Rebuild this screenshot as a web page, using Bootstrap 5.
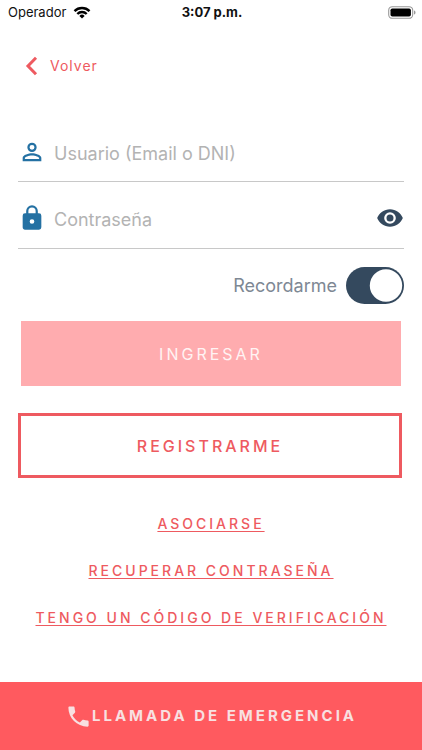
<!DOCTYPE html>
<html lang="es">
<head>
<meta charset="utf-8">
<meta name="viewport" content="width=device-width, initial-scale=1">
<title>Ingresar</title>
<link rel="stylesheet" href="https://cdn.jsdelivr.net/npm/bootstrap@5.3.0/dist/css/bootstrap.min.css">
<style>
:root { --coral: #ff5a5f; --coral-text: #ee5a60; --navy: #34495e; --blue: #2471a3; }
body { font-family: Inter, "Liberation Sans", sans-serif; color: #111; background: #fff; }
svg { display: block; flex: none; }
.status-bar { height: 24px; padding: 0 6px 0 8px; font-size: 13px; line-height: 24px; }
.status-bar .side { flex: 1 1 0; gap: 7px; }
.login-area { padding: 0 18px; }
.back-link { color: var(--coral-text); font-size: 14px; line-height: 20px; letter-spacing: 1px; margin: 32px 0 0 7px; gap: 12px; }
.login-form { margin-top: 40px; }
.field { height: 67px; padding: 14px 0 8px; border-bottom: 1px solid #c8c8c8; color: var(--blue); gap: 8px; }
.field:first-child { height: 60px; padding: 0; }
.field input { border: 0; padding: 0; font-size: 18px; line-height: 24px; margin-top: 4px; background: none; box-shadow: none; color: #333; }
.field input:focus { box-shadow: none; background: none; }
.field input::placeholder { color: #b3b3b3; opacity: 1; }
.eye-btn { color: var(--navy); border: 0; padding: 0; }
.remember { margin-top: 18px; gap: 9px; font-size: 18px; line-height: 37px; color: #7e8894; }
.remember .form-check-input { width: 58px; height: 37px; margin: 0; border: 0; background-size: 37px; }
.remember .form-check-input:checked { background-color: var(--navy); background-position: right center;
  background-image: url("data:image/svg+xml,%3csvg xmlns='http://www.w3.org/2000/svg' viewBox='0 0 37 37'%3e%3ccircle cx='19' cy='18.5' r='16.2' fill='white'/%3e%3c/svg%3e"); }
.tracked { letter-spacing: 3px; }
.main-btn { height: 65px; border-radius: 0; font-size: 16px; }
.enter-btn, .enter-btn:hover { background: #ffacaf; color: #fff3f3; margin: 17px 3px 0; }
.register-btn, .register-btn:hover { border: 3px solid var(--coral-text); color: var(--coral-text); margin: 27px 2px 0 0; font-weight: 500; }
.links { margin-top: 35px; gap: 25px; font-size: 14px; line-height: 22px; font-weight: 500; }
.links a { color: var(--coral-text); text-underline-offset: 2px; text-decoration-thickness: 1px; }
.emergency, .emergency:hover { background: var(--coral); color: #f8e0e1; height: 68px; border-radius: 0; font-size: 15px; font-weight: 700; }
</style>
<script defer src="https://cdn.jsdelivr.net/npm/bootstrap@5.3.0/dist/js/bootstrap.bundle.min.js"></script>
</head>
<body class="d-flex flex-column min-vh-100">
<header class="status-bar d-flex align-items-center">
  <div class="side d-flex align-items-center">
    <span>Operador</span>
    <svg width="18" height="13" viewBox="0 0 18 13" fill="none" stroke="#000" stroke-width="2.4" aria-hidden="true"><path d="M1.5 5.1a10.6 10.6 0 0 1 15 0M4.3 8a6.7 6.7 0 0 1 9.4 0"/><path d="M9 12.5 6.4 9.9a3.7 3.7 0 0 1 5.2 0z" fill="#000" stroke="none"/></svg>
  </div>
  <div class="fw-bold">3:07 p.m.</div>
  <div class="side d-flex justify-content-end">
    <svg width="28" height="13" viewBox="0 0 28 13" aria-hidden="true"><rect x=".7" y=".7" width="24" height="11.6" rx="3.6" fill="none" stroke="#999" stroke-width="1.1"/><rect x="2.5" y="2.4" width="20.4" height="8.2" rx="1.8"/><path d="M26 4.5c2 .6 2 3.4 0 4z" fill="#999"/></svg>
  </div>
</header>
<main class="login-area">
  <a href="#" class="back-link d-inline-flex align-items-center text-decoration-none">
    <svg width="13" height="20" viewBox="0 0 13 20" fill="none" stroke="currentColor" stroke-width="3" aria-hidden="true"><path d="M11 1.8 3 10l8 8.2"/></svg>
    Volver
  </a>
  <form class="login-form d-flex flex-column">
    <div class="field d-flex align-items-center">
      <svg width="28" height="28" viewBox="0 0 24 24" fill="currentColor" aria-hidden="true"><path d="M12 5.9a2.1 2.1 0 1 1 0 4.2 2.1 2.1 0 0 1 0-4.2m0 9c2.97 0 6.1 1.46 6.1 2.1v1.1H5.9V17c0-.64 3.13-2.1 6.1-2.1M12 4a4 4 0 1 0 0 8 4 4 0 0 0 0-8zm0 9c-2.67 0-8 1.34-8 4v3h16v-3c0-2.66-5.33-4-8-4z"/></svg>
      <input type="text" class="form-control" placeholder="Usuario (Email o DNI)" aria-label="Usuario (Email o DNI)">
    </div>
    <div class="field d-flex align-items-center">
      <svg width="28" height="28" viewBox="0 0 24 24" fill="currentColor" aria-hidden="true"><path d="M18 8h-1V6A5 5 0 0 0 7 6v2H6a2 2 0 0 0-2 2v10c0 1.1.9 2 2 2h12a2 2 0 0 0 2-2V10a2 2 0 0 0-2-2zm-6 9a2 2 0 1 1 0-4 2 2 0 0 1 0 4zm3.1-9H8.9V6a3.1 3.1 0 0 1 6.2 0z"/></svg>
      <input type="password" class="form-control" placeholder="Contraseña" aria-label="Contraseña">
      <button type="button" class="btn eye-btn" aria-label="Mostrar contraseña">
        <svg width="28" height="28" viewBox="0 0 24 24" fill="currentColor" aria-hidden="true"><path d="M12 4.5C7 4.5 2.73 7.61 1 12c1.73 4.39 6 7.5 11 7.5s9.27-3.11 11-7.5c-1.73-4.39-6-7.5-11-7.5zM12 17a5 5 0 1 1 0-10 5 5 0 0 1 0 10zm0-8a3 3 0 1 0 0 6 3 3 0 0 0 0-6z"/></svg>
      </button>
    </div>
    <div class="remember d-flex justify-content-end form-switch p-0">
      <label for="recordarme">Recordarme</label>
      <input id="recordarme" class="form-check-input" type="checkbox" role="switch" checked>
    </div>
    <button type="submit" class="btn main-btn enter-btn tracked">INGRESAR</button>
    <button type="button" class="btn main-btn register-btn tracked">REGISTRARME</button>
  </form>
  <nav class="links tracked d-flex flex-column align-items-center" aria-label="Opciones de cuenta">
    <a href="#">ASOCIARSE</a>
    <a href="#">RECUPERAR CONTRASEÑA</a>
    <a href="#">TENGO UN CÓDIGO DE VERIFICACIÓN</a>
  </nav>
</main>
<button type="button" class="btn emergency tracked w-100 mt-auto d-flex align-items-center justify-content-center">
  <svg width="27" height="27" viewBox="0 0 24 24" fill="currentColor" aria-hidden="true"><path d="M6.62 10.79c1.44 2.83 3.76 5.14 6.59 6.59l2.2-2.2c.27-.27.67-.36 1.02-.24 1.12.37 2.33.57 3.57.57.55 0 1 .45 1 1V20c0 .55-.45 1-1 1C10.61 21 3 13.39 3 4c0-.55.45-1 1-1h3.5c.55 0 1 .45 1 1 0 1.25.2 2.45.57 3.57.11.35.03.74-.25 1.02z"/></svg>
  LLAMADA DE EMERGENCIA
</button>
</body>
</html>
